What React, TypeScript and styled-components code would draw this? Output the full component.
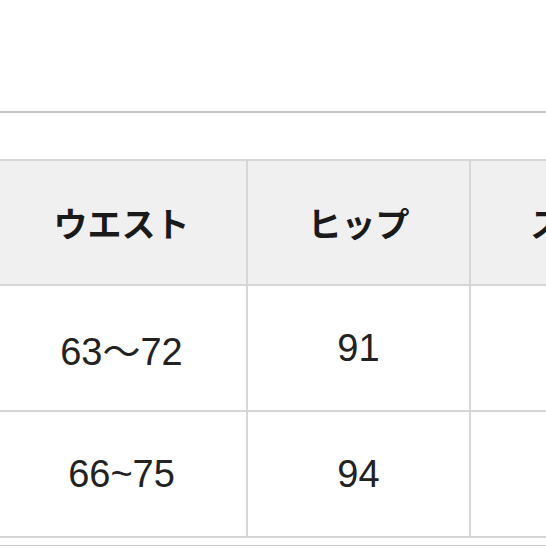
import React from 'react';
import styled, { createGlobalStyle } from 'styled-components';

const GlobalStyle = createGlobalStyle`
  html, body {
    margin: 0;
    padding: 0;
    background: #ffffff;
    overflow: hidden;
  }
`;

const Page = styled.div`
  width: 546px;
  height: 546px;
  overflow: hidden;
  background: #ffffff;
  font-family: 'Liberation Sans', 'Noto Sans CJK JP', sans-serif;
`;

const Divider = styled.div<{ $top: number; $color: string }>`
  margin-top: ${(p) => p.$top}px;
  height: 2px;
  background: ${(p) => p.$color};
`;

const SizeTable = styled.table`
  margin-top: 46px;
  margin-left: -5px;
  border-collapse: collapse;
  table-layout: fixed;
  width: 690px;
`;

const HeadCell = styled.th<{ $width: number }>`
  width: ${(p) => p.$width}px;
  height: 123px;
  padding: 0;
  background: #f0f0f0;
  border: 2px solid #d6d6d6;
  font-family: 'Noto Sans CJK JP', sans-serif;
  font-size: 34px;
  font-weight: 700;
  color: #1a1a1a;
  text-align: center;
  vertical-align: middle;
  white-space: nowrap;
`;

const BodyCell = styled.td`
  height: 124px;
  padding: 0;
  border: 2px solid #d6d6d6;
  font-family: 'Liberation Sans', 'Noto Sans CJK JP', sans-serif;
  font-size: 38px;
  color: #222222;
  text-align: center;
  vertical-align: middle;
  white-space: nowrap;
`;

const columns = [
  { label: 'ウエスト', width: 249 },
  { label: 'ヒップ', width: 221 },
  { label: 'スソ幅', width: 220 },
];

const rows = [
  ['63〜72', '91', ''],
  ['66~75', '94', ''],
];

export default function App() {
  return (
    <Page>
      <GlobalStyle />
      <Divider $top={111} $color="#c4c4c4" />
      <SizeTable>
        <thead>
          <tr>
            {columns.map((col) => (
              <HeadCell key={col.label} $width={col.width}>
                {col.label}
              </HeadCell>
            ))}
          </tr>
        </thead>
        <tbody>
          {rows.map((row, i) => (
            <tr key={i}>
              {row.map((value, j) => (
                <BodyCell key={j}>{value}</BodyCell>
              ))}
            </tr>
          ))}
        </tbody>
      </SizeTable>
      <Divider $top={7} $color="#c4c4c4" />
    </Page>
  );
}
